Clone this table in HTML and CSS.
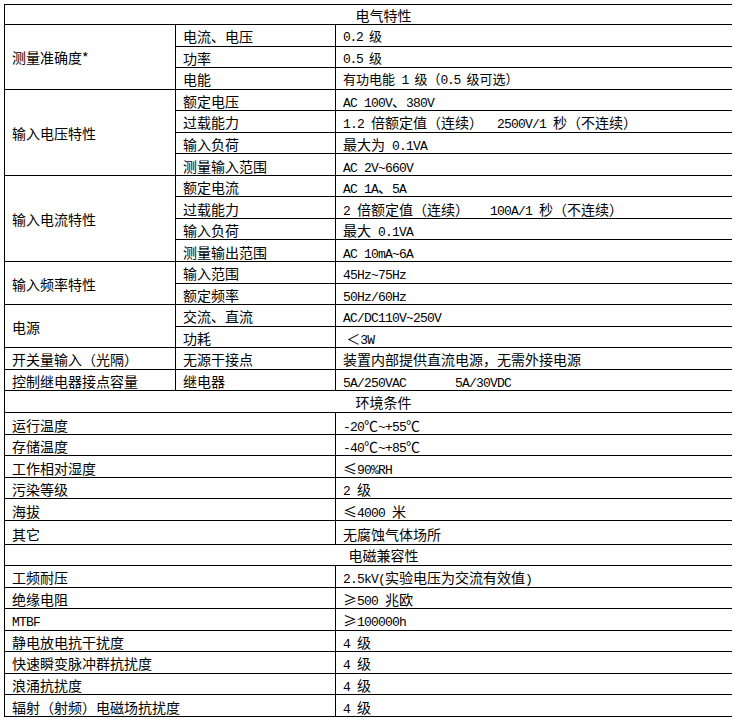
FILE: index.html
```html
<!DOCTYPE html>
<html lang="zh-CN">
<head>
<meta charset="utf-8">
<title>技术参数</title>
<link rel="stylesheet" href="styles.css">
</head>
<body>
<table class="spec">
  <colgroup>
    <col class="c1">
    <col class="c2">
    <col class="c3">
  </colgroup>
  <tbody>
    <tr class="r-t1"><td class="title" colspan="3">电气特性</td></tr>

    <tr><td class="group" rowspan="3">测量准确度*</td><td>电流、电压</td><td class="s13"><span class="m">0.2 </span>级</td></tr>
    <tr><td>功率</td><td class="s13"><span class="m">0.5 </span>级</td></tr>
    <tr><td>电能</td><td class="s13">有功电能<span class="m"> 1 </span>级（<span class="m">0.5 </span>级可选）</td></tr>

    <tr><td class="group" rowspan="4">输入电压特性</td><td>额定电压</td><td><span class="m">AC 100V</span>、<span class="m">380V</span></td></tr>
    <tr><td>过载能力</td><td><span class="m">1.2 </span>倍额定值（连续）<span class="m">  2500V/1 </span>秒（不连续）</td></tr>
    <tr><td>输入负荷</td><td>最大为<span class="m"> 0.1VA</span></td></tr>
    <tr><td>测量输入范围</td><td><span class="m">AC 2V~660V</span></td></tr>

    <tr><td class="group" rowspan="4">输入电流特性</td><td>额定电流</td><td><span class="m">AC 1A</span>、<span class="m">5A</span></td></tr>
    <tr><td>过载能力</td><td><span class="m">2 </span>倍额定值（连续）<span class="m">   100A/1 </span>秒（不连续）</td></tr>
    <tr><td>输入负荷</td><td>最大<span class="m"> 0.1VA</span></td></tr>
    <tr><td>测量输出范围</td><td><span class="m">AC 10mA~6A</span></td></tr>

    <tr><td class="group" rowspan="2">输入频率特性</td><td>输入范围</td><td><span class="m">45Hz~75Hz</span></td></tr>
    <tr><td>额定频率</td><td><span class="m">50Hz/60Hz</span></td></tr>

    <tr><td class="group" rowspan="2">电源</td><td>交流、直流</td><td><span class="m">AC/DC110V~250V</span></td></tr>
    <tr><td>功耗</td><td> ＜<span class="m">3W</span></td></tr>

    <tr><td>开关量输入（光隔）</td><td>无源干接点</td><td>装置内部提供直流电源，无需外接电源</td></tr>
    <tr><td>控制继电器接点容量</td><td>继电器</td><td><span class="m">5A/250VAC       5A/30VDC</span></td></tr>

    <tr class="r-t2"><td class="title" colspan="3">环境条件</td></tr>
    <tr><td colspan="2">运行温度</td><td><span class="m">-20</span>℃<span class="m">~+55</span>℃</td></tr>
    <tr><td colspan="2">存储温度</td><td><span class="m">-40</span>℃<span class="m">~+85</span>℃</td></tr>
    <tr><td colspan="2">工作相对湿度</td><td>≤<span class="m">90%RH</span></td></tr>
    <tr><td colspan="2">污染等级</td><td><span class="m">2 </span>级</td></tr>
    <tr><td colspan="2">海拔</td><td>≤<span class="m">4000 </span>米</td></tr>
    <tr class="r-tall"><td colspan="2">其它</td><td>无腐蚀气体场所</td></tr>

    <tr class="r-t3"><td class="title" colspan="3">电磁兼容性</td></tr>
    <tr><td colspan="2">工频耐压</td><td><span class="m">2.5kV(</span>实验电压为交流有效值<span class="m">)</span></td></tr>
    <tr><td colspan="2">绝缘电阻</td><td>≥<span class="m">500 </span>兆欧</td></tr>
    <tr><td colspan="2"><span class="m">MTBF</span></td><td>≥<span class="m">100000h</span></td></tr>
    <tr><td colspan="2">静电放电抗干扰度</td><td><span class="m">4 </span>级</td></tr>
    <tr><td colspan="2">快速瞬变脉冲群抗扰度</td><td><span class="m">4 </span>级</td></tr>
    <tr><td colspan="2">浪涌抗扰度</td><td><span class="m">4 </span>级</td></tr>
    <tr><td colspan="2">辐射（射频）电磁场抗扰度</td><td><span class="m">4 </span>级</td></tr>
  </tbody>
</table>
</body>
</html>
```

FILE: styles.css
```css
html, body {
  background: #ffffff;
}

body {
  margin: 4px;
}

.spec {
  border-collapse: collapse;
  table-layout: fixed;
  width: 728px;
  font-family: "Noto Sans CJK SC", sans-serif;
  font-size: 14px;
  color: #000000;
}

.c1 { width: 171px; }
.c2 { width: 160px; }
.c3 { width: 397px; }

.spec tr {
  height: 21.55px;
}

.spec tr.r-t1 { height: 20px; }
.spec tr.r-t2 { height: 22px; }
.spec tr.r-tall { height: 24px; }
.spec tr.r-t3 { height: 21px; }

.spec td {
  border: 1px solid #000000;
  padding: 2px 0 0 7px;
  line-height: 14px;
  vertical-align: middle;
  white-space: pre;
  overflow: hidden;
}

.spec td.title {
  text-align: center;
  padding-left: 30px;
  padding-top: 0;
}

.spec td.group {
  padding-top: 1px;
}

.spec td.s13 {
  font-size: 13px;
}

.m {
  font-family: "Liberation Mono", monospace;
  font-size: 13px;
  letter-spacing: -0.8px;
  line-height: 8px;
}

.s13 .m {
  font-size: 13px;
  letter-spacing: -1.3px;
}
```
